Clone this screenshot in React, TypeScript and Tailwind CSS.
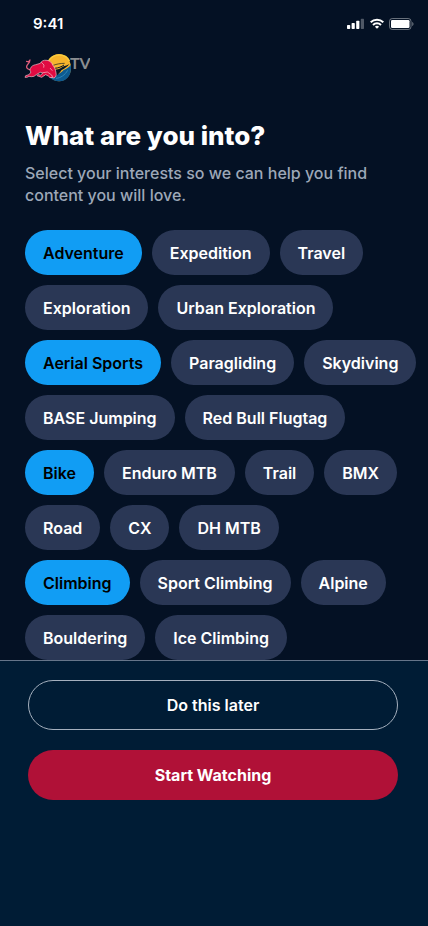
import { useState } from 'react';
import clsx from 'clsx';

// Each group starts on its own line, led by the parent category
const groups = [
  [
    'Adventure', 'Expedition', 'Travel', 'Exploration', 'Urban Exploration',
  ],
  [
    'Aerial Sports', 'Paragliding', 'Skydiving', 'BASE Jumping', 'Red Bull Flugtag',
  ],
  ['Bike', 'Enduro MTB', 'Trail', 'BMX', 'Road', 'CX', 'DH MTB'],
  ['Climbing', 'Sport Climbing', 'Alpine', 'Bouldering', 'Ice Climbing'],
];

function StatusBar() {
  return (
    <div className="flex h-12 items-center justify-between pl-[33px] pr-3.5">
      <span className="text-[15px] leading-5 font-semibold">9:41</span>
      <div className="flex items-center gap-[5px]">
        <svg width="18" height="12" viewBox="0 0 18 12" fill="#fff" aria-hidden="true">
          <rect x="0" y="7" width="3.2" height="4" rx="0.7" />
          <rect x="4.6" y="5" width="3.2" height="6" rx="0.7" />
          <rect x="9.2" y="2.8" width="3.2" height="8.2" rx="0.7" />
          <rect x="13.8" y="0.8" width="3.2" height="10.2" rx="0.7" opacity="0.3" />
        </svg>
        <svg width="14" height="12" viewBox="0 0 14 12" fill="none" stroke="#fff" strokeWidth="2" aria-hidden="true">
          <path d="M.7 4.2a9 9 0 0 1 12.6 0" />
          <path d="M3 7a5.7 5.7 0 0 1 8 0" />
          <path d="M7 10.8 4.9 8.8a3 3 0 0 1 4.2 0Z" fill="#fff" stroke="none" />
        </svg>
        <svg width="25" height="12" viewBox="0 0 25 12" fill="none" aria-hidden="true">
          <rect x="0.5" y="0.5" width="21.5" height="11" rx="2.8" stroke="#fff" opacity="0.4" />
          <rect x="2" y="2" width="18.5" height="8" rx="1.2" fill="#fff" />
          <path d="M23.2 4v4c.8-.3 1.3-1.1 1.3-2s-.5-1.7-1.3-2Z" fill="#fff" opacity="0.4" />
        </svg>
      </div>
    </div>
  );
}

function Logo() {
  return (
    <svg width="66" height="30" viewBox="0 0 198 90" role="img" aria-label="Red Bull TV">
      {/* sun */}
      <ellipse cx="105" cy="47" rx="36" ry="41" fill="#f7b42c" />
      <path d="M140 38c5 25-8 50-34 50-14 0-25-6-32-16l16-4c14-1 22-6 29-14 9-4 17-9 21-16Z" fill="#0d5a90" />
      <path d="M136 36c-6 9-15 14-23 18-5 8-10 13-17 18l-6-19c11 0 20-4 26-9 8-3 15-4 20-8Z" fill="#081626" />
      <path d="M88 40c10-4 22-6 34-6" fill="none" stroke="#081626" strokeWidth="2" />
      <path d="M92 49c12-1 21-5 28-10" fill="none" stroke="#081626" strokeWidth="3" />
      <path d="M96 79c14-1 27-10 35-24" fill="none" stroke="#2f86b8" strokeWidth="3" />
      <path d="M73 28C80 15 92 9 106 9s25 7 30 18" fill="none" stroke="#f9cb3d" strokeWidth="5" />
      {/* bull */}
      <path
        d="M8 28c4 2 8 0 10-4M17 25c2 7-8 12-9 18-1 5 3 9 11 10"
        fill="none"
        stroke="#df5e7c"
        strokeWidth="4"
        strokeLinecap="round"
      />
      <g fill="#e10b42" stroke="#f5c3cf" strokeWidth="2">
        <path d="M19 50c2-7 9-11 16-12l14-4c2-6 10-11 20-9 9 1 14 7 17 14 6 7 9 15 10 24 2 7-1 13-6 15l-10-2-9-9-10-3-12-3-11 6-8 6-8 1-7-1-6 3H3l2-5 10-3 6-8c-3-3-4-6-2-10Z" />
        <path d="m58 62-8 7-9-1-2 3 14 5 12-8 8 4 5 5 8-1-3-7-13-9Z" />
      </g>
      <path d="m52 31 8 8-1 8M78 48l7 8" fill="none" stroke="#f5c3cf" strokeWidth="2" />
      <text x="138" y="50" fontFamily="Lato, sans-serif" fontSize="48" fontWeight="700" fill="#8b8e91">
        TV
      </text>
    </svg>
  );
}

export default function App() {
  const [selected, setSelected] = useState(['Adventure', 'Aerial Sports', 'Bike', 'Climbing']);

  const toggle = (name: string) => {
    setSelected(prev =>
      prev.includes(name) ? prev.filter(item => item !== name) : [...prev, name]
    );
  };

  return (
    <div className="flex min-h-screen flex-col bg-[#041124] font-['Inter',sans-serif] text-white">
      <StatusBar />
      <header className="px-6 pt-1">
        <Logo />
      </header>

      <main className="pt-9 pl-[25px]">
        <h1 className="text-[26px] leading-9 font-extrabold">What are you into?</h1>
        <p className="pt-2 pr-8 text-base leading-[22px] font-medium text-[#9da8b8]">
          Select your interests so we can help you find content you will love.
        </p>
        <div className="flex flex-col gap-2.5 pt-6 pr-2">
          {groups.map(group => (
            <div key={group[0]} className="flex flex-wrap gap-2.5">
              {group.map(name => {
                const active = selected.includes(name);
                return (
                  <button
                    key={name}
                    type="button"
                    aria-pressed={active}
                    onClick={() => toggle(name)}
                    className={clsx(
                      'h-[45px] rounded-full px-[18px] text-base font-semibold whitespace-nowrap',
                      active ? 'bg-[#119df4] text-black' : 'bg-[#2a3755] text-white'
                    )}
                  >
                    {name}
                  </button>
                );
              })}
            </div>
          ))}
        </div>
      </main>

      {/* bottom actions */}
      <footer className="flex flex-1 flex-col gap-5 border-t border-[#66758a] bg-[#001c35] pt-[19px] pr-[30px] pb-10 pl-7">
        <button type="button" className="h-[50px] rounded-full border border-[#a5b0be] text-base font-semibold">
          Do this later
        </button>
        <button type="button" className="h-[50px] rounded-full bg-[#b01137] text-base font-bold">
          Start Watching
        </button>
      </footer>
    </div>
  );
}
